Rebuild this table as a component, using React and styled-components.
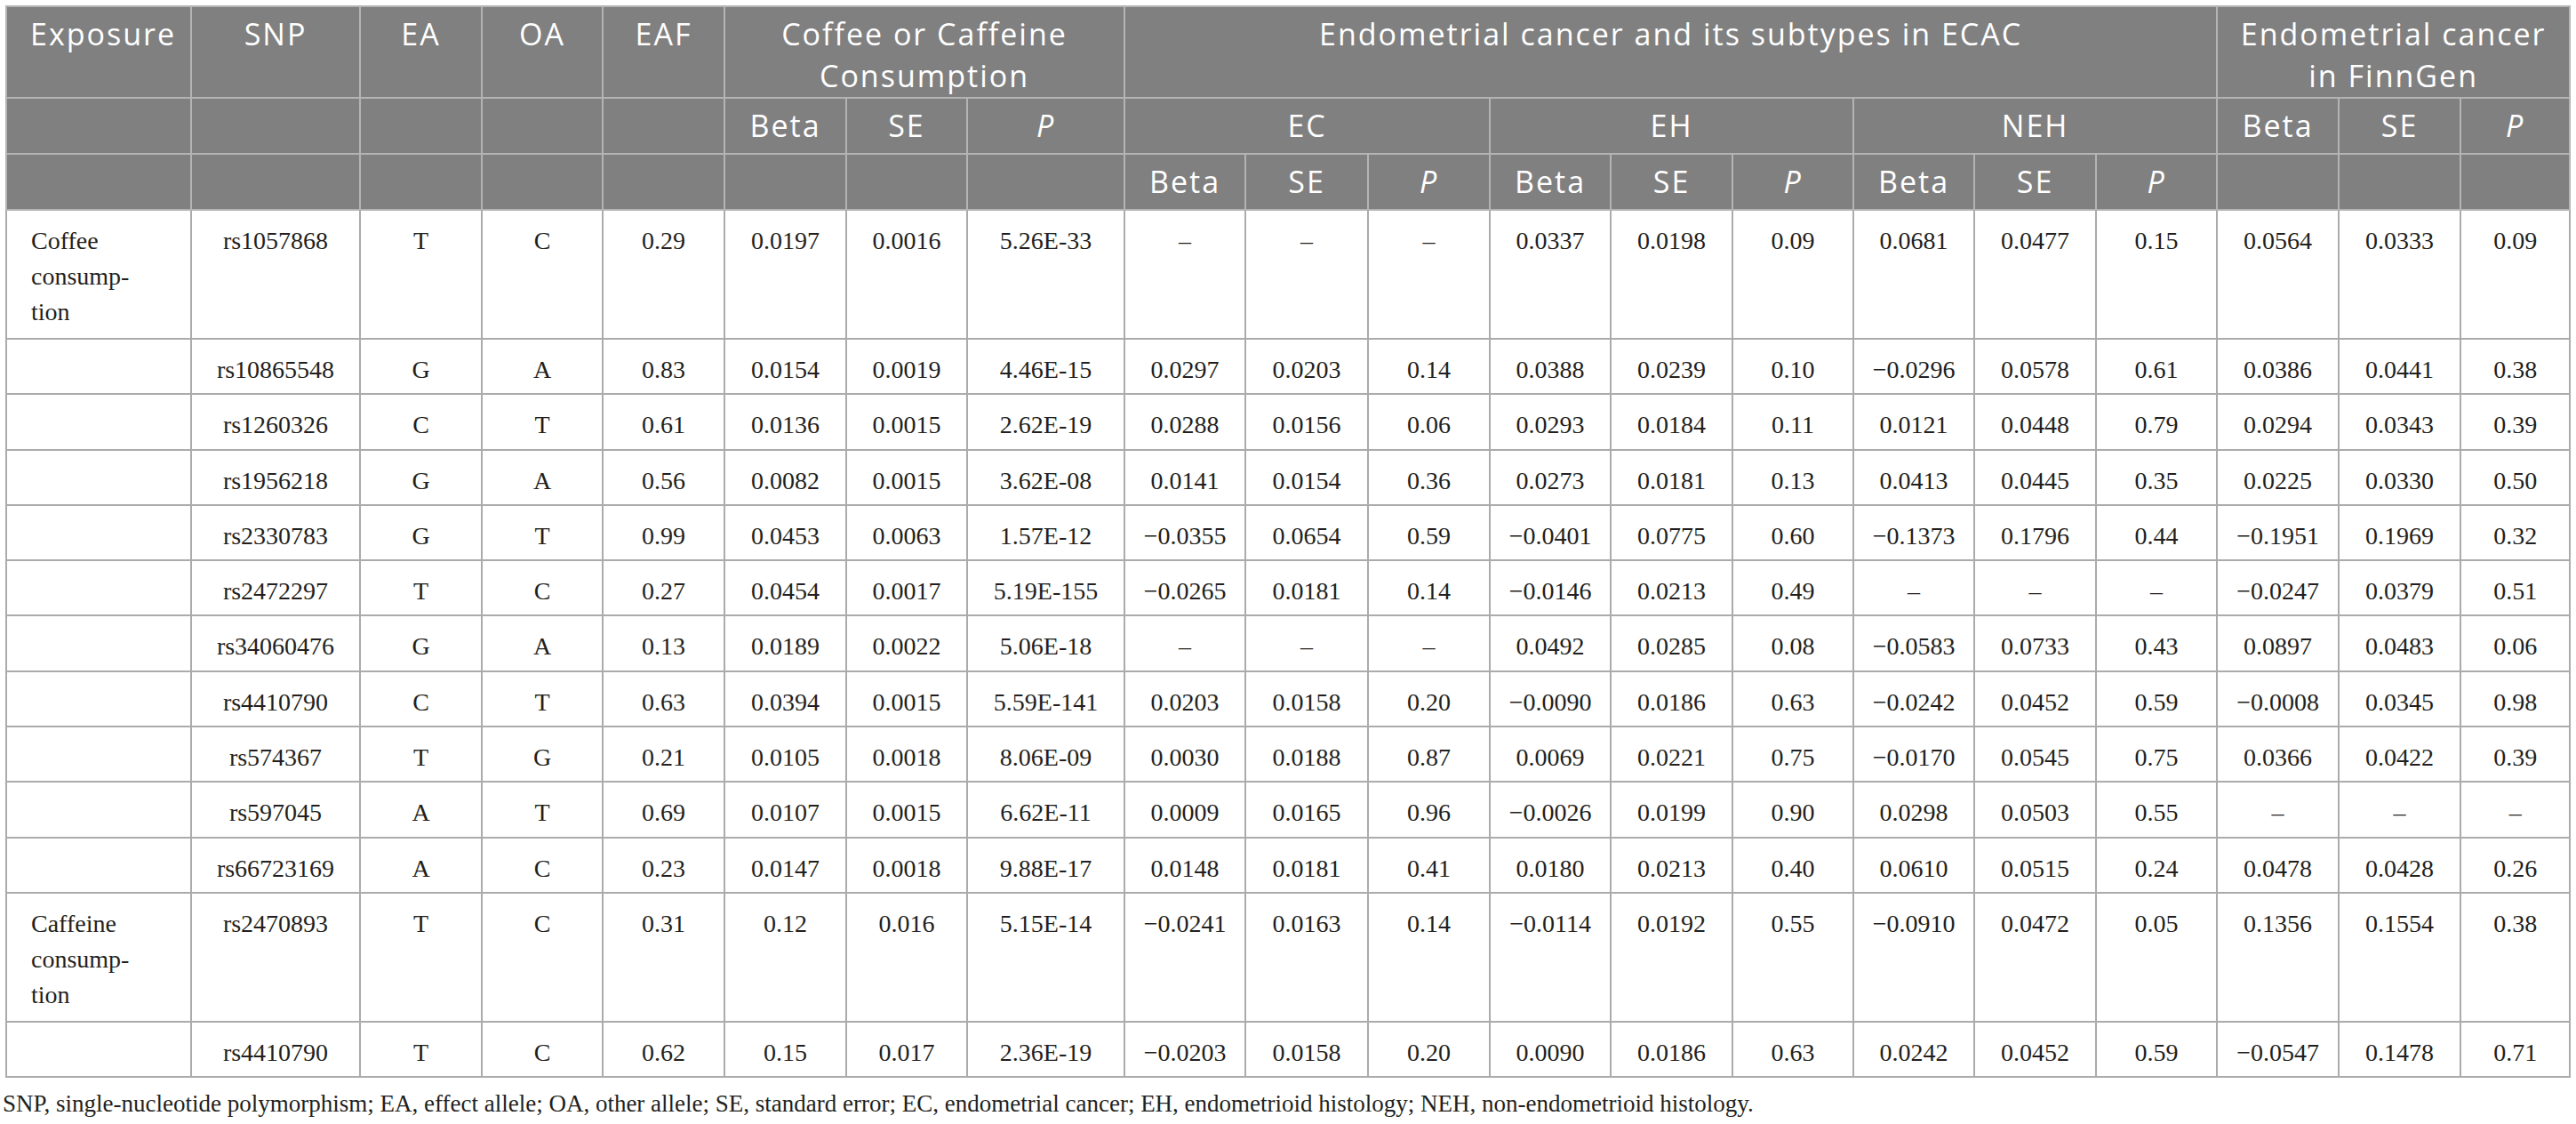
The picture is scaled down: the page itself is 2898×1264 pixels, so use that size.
import React from 'react'
import styled, { createGlobalStyle } from 'styled-components'

const GlobalStyle = createGlobalStyle`
  html, body {
    margin: 0;
    padding: 0;
    background: #fff;
  }
`

const widths = [208, 190, 137, 136, 137, 137, 136, 177, 136, 138, 137, 136, 137, 136, 136, 137, 136, 137, 137, 123]

const X = '\u2013'

// leading "-" becomes a real minus sign
const num = v => (v[0] === '-' ? '\u2212' + v.slice(1) : v)

const rows = [
  { exposure: ['Coffee', 'consump-', 'tion'], cells: ['rs1057868', 'T', 'C', '0.29', '0.0197', '0.0016', '5.26E-33', X, X, X, '0.0337', '0.0198', '0.09', '0.0681', '0.0477', '0.15', '0.0564', '0.0333', '0.09'] },
  { cells: ['rs10865548', 'G', 'A', '0.83', '0.0154', '0.0019', '4.46E-15', '0.0297', '0.0203', '0.14', '0.0388', '0.0239', '0.10', '-0.0296', '0.0578', '0.61', '0.0386', '0.0441', '0.38'] },
  { cells: ['rs1260326', 'C', 'T', '0.61', '0.0136', '0.0015', '2.62E-19', '0.0288', '0.0156', '0.06', '0.0293', '0.0184', '0.11', '0.0121', '0.0448', '0.79', '0.0294', '0.0343', '0.39'] },
  { cells: ['rs1956218', 'G', 'A', '0.56', '0.0082', '0.0015', '3.62E-08', '0.0141', '0.0154', '0.36', '0.0273', '0.0181', '0.13', '0.0413', '0.0445', '0.35', '0.0225', '0.0330', '0.50'] },
  { cells: ['rs2330783', 'G', 'T', '0.99', '0.0453', '0.0063', '1.57E-12', '-0.0355', '0.0654', '0.59', '-0.0401', '0.0775', '0.60', '-0.1373', '0.1796', '0.44', '-0.1951', '0.1969', '0.32'] },
  { cells: ['rs2472297', 'T', 'C', '0.27', '0.0454', '0.0017', '5.19E-155', '-0.0265', '0.0181', '0.14', '-0.0146', '0.0213', '0.49', X, X, X, '-0.0247', '0.0379', '0.51'] },
  { cells: ['rs34060476', 'G', 'A', '0.13', '0.0189', '0.0022', '5.06E-18', X, X, X, '0.0492', '0.0285', '0.08', '-0.0583', '0.0733', '0.43', '0.0897', '0.0483', '0.06'] },
  { cells: ['rs4410790', 'C', 'T', '0.63', '0.0394', '0.0015', '5.59E-141', '0.0203', '0.0158', '0.20', '-0.0090', '0.0186', '0.63', '-0.0242', '0.0452', '0.59', '-0.0008', '0.0345', '0.98'] },
  { cells: ['rs574367', 'T', 'G', '0.21', '0.0105', '0.0018', '8.06E-09', '0.0030', '0.0188', '0.87', '0.0069', '0.0221', '0.75', '-0.0170', '0.0545', '0.75', '0.0366', '0.0422', '0.39'] },
  { cells: ['rs597045', 'A', 'T', '0.69', '0.0107', '0.0015', '6.62E-11', '0.0009', '0.0165', '0.96', '-0.0026', '0.0199', '0.90', '0.0298', '0.0503', '0.55', X, X, X] },
  { cells: ['rs66723169', 'A', 'C', '0.23', '0.0147', '0.0018', '9.88E-17', '0.0148', '0.0181', '0.41', '0.0180', '0.0213', '0.40', '0.0610', '0.0515', '0.24', '0.0478', '0.0428', '0.26'] },
  { exposure: ['Caffeine', 'consump-', 'tion'], cells: ['rs2470893', 'T', 'C', '0.31', '0.12', '0.016', '5.15E-14', '-0.0241', '0.0163', '0.14', '-0.0114', '0.0192', '0.55', '-0.0910', '0.0472', '0.05', '0.1356', '0.1554', '0.38'] },
  { cells: ['rs4410790', 'T', 'C', '0.62', '0.15', '0.017', '2.36E-19', '-0.0203', '0.0158', '0.20', '0.0090', '0.0186', '0.63', '0.0242', '0.0452', '0.59', '-0.0547', '0.1478', '0.71'] }
]

const P = () => <Ital>P</Ital>

const stat = () => [
  <HeadCell key="b">Beta</HeadCell>,
  <HeadCell key="s">SE</HeadCell>,
  <HeadCell key="p"><P /></HeadCell>
]

const blanks = (n, k) =>
  Array.from({ length: n }, (_, i) => <HeadCell key={k + i} />)

export default function App() {
  return (
    <Page>
      <GlobalStyle />
      <Table>
        <colgroup>
          {widths.map((w, i) => <col key={i} style={{ width: w }} />)}
        </colgroup>
        <thead>
          <HeadRow $h={102}>
            <HeadCell $left>Exposure</HeadCell>
            <HeadCell>SNP</HeadCell>
            <HeadCell>EA</HeadCell>
            <HeadCell>OA</HeadCell>
            <HeadCell>EAF</HeadCell>
            <HeadCell colSpan={3}>Coffee or Caffeine<br />Consumption</HeadCell>
            <HeadCell colSpan={9}>Endometrial cancer and its subtypes in ECAC</HeadCell>
            <HeadCell colSpan={3}>Endometrial cancer<br />in FinnGen</HeadCell>
          </HeadRow>
          <HeadRow $h={63}>
            {blanks(5, 'a')}
            {stat()}
            <HeadCell colSpan={3}>EC</HeadCell>
            <HeadCell colSpan={3}>EH</HeadCell>
            <HeadCell colSpan={3}>NEH</HeadCell>
            {stat()}
          </HeadRow>
          <HeadRow $h={63}>
            {blanks(8, 'b')}
            {stat()}
            {stat()}
            {stat()}
            {blanks(3, 'c')}
          </HeadRow>
        </thead>
        <tbody>
          {rows.map((r, i) => (
            <Row key={i} $tall={!!r.exposure}>
              <Cell $left>
                {r.exposure && r.exposure.map((l, j) => <Line key={j}>{l}</Line>)}
              </Cell>
              {r.cells.map((c, j) => <Cell key={j}>{num(c)}</Cell>)}
            </Row>
          ))}
        </tbody>
      </Table>
      <Footnote>
        SNP, single-nucleotide polymorphism; EA, effect allele; OA, other allele; SE, standard error; EC, endometrial cancer; EH, endometrioid histology; NEH, non-endometrioid histology.
      </Footnote>
    </Page>
  )
}

const Page = styled.div`
  padding: 6px 0 0 6px;
  width: 2892px;
`

const Table = styled.table`
  border-collapse: collapse;
  table-layout: fixed;
  width: 2884px;
`

const HeadRow = styled.tr`
  height: ${p => p.$h}px;
`

const HeadCell = styled.th`
  background: #808080;
  color: #fff;
  font-family: 'Open Sans', 'Noto Sans', sans-serif;
  font-size: 34px;
  font-weight: 400;
  line-height: 47px;
  letter-spacing: 2px;
  padding: 7px ${p => (p.$left ? '8px 0 26px' : '6px 0')};
  text-align: ${p => (p.$left ? 'left' : 'center')};
  vertical-align: top;
  border: 2px solid #b4b4b4;
  white-space: nowrap;
`

const Ital = styled.i`
  font-style: italic;
`

const Row = styled.tr`
  height: ${p => (p.$tall ? 145 : 62.3)}px;
`

const Cell = styled.td`
  font-family: 'Liberation Serif', 'Times New Roman', serif;
  font-size: 28px;
  line-height: 40px;
  color: #231f20;
  padding: 14px ${p => (p.$left ? '6px 0 27px' : '4px 0')};
  text-align: ${p => (p.$left ? 'left' : 'center')};
  vertical-align: top;
  border: 2px solid #ababab;
  white-space: nowrap;
`

const Line = styled.div``

const Footnote = styled.p`
  margin: 9px 0 0 -3px;
  font-family: 'Liberation Serif', 'Times New Roman', serif;
  font-size: 27px;
  line-height: 40px;
  color: #231f20;
  white-space: nowrap;
`
